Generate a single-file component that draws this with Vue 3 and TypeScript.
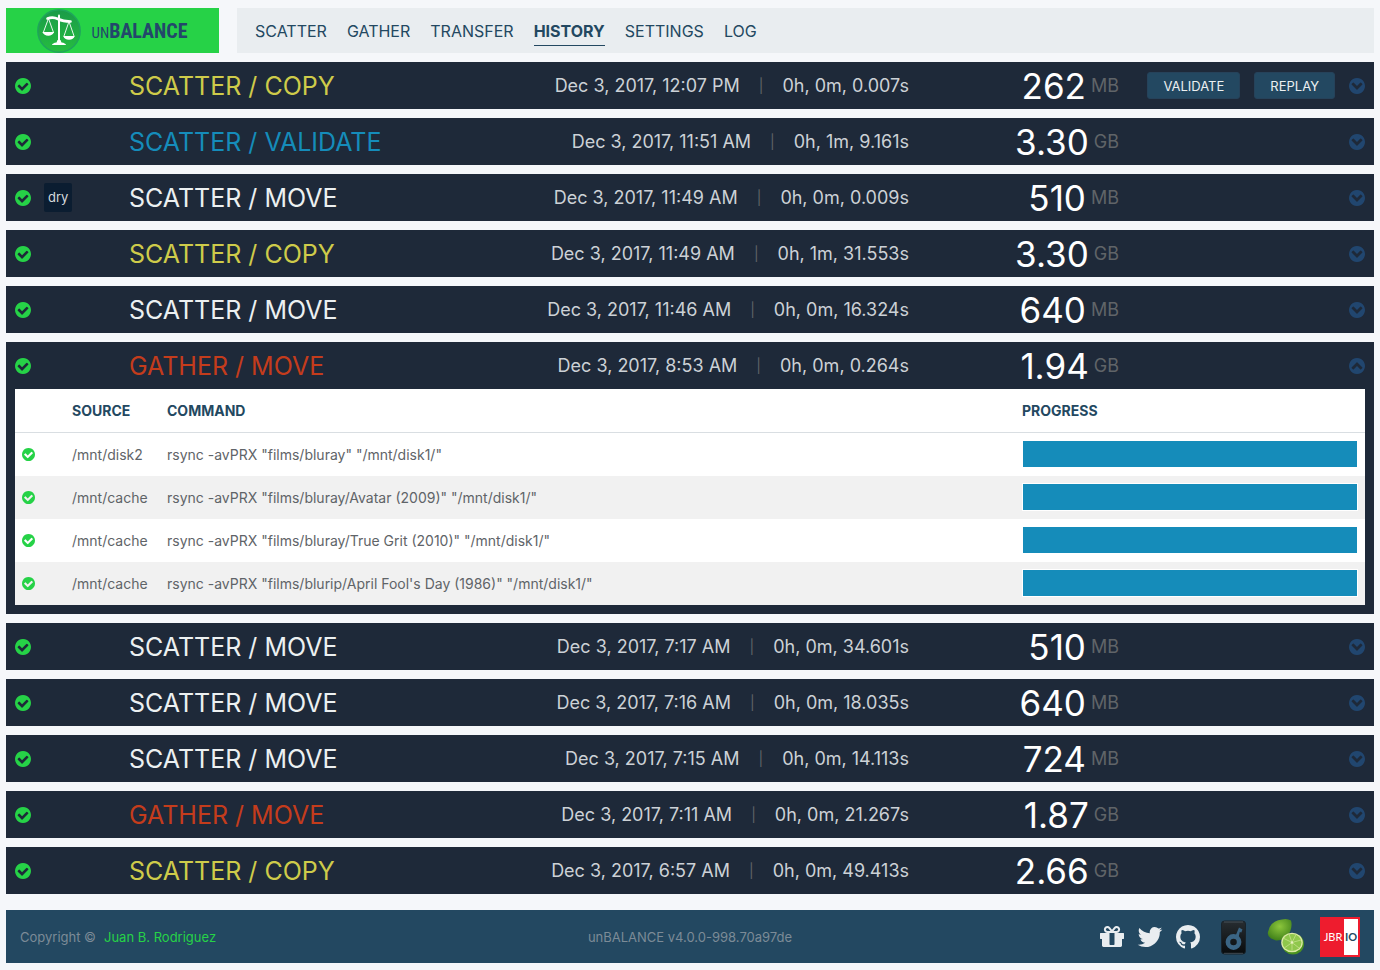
<script setup lang="ts">
import { reactive } from 'vue'

type Kind = 'copy' | 'validate' | 'move' | 'gather'

interface Command {
  source: string
  line: string
  progress: number
}

interface Operation {
  id: number
  kind: Kind
  title: string
  finished: string
  elapsed: string
  size: string
  unit: string
  dry?: boolean
  actions?: string[]
  open?: boolean
  commands: Command[]
}

const tabs = ['SCATTER', 'GATHER', 'TRANSFER', 'HISTORY', 'SETTINGS', 'LOG']
const activeTab = 'HISTORY'

const operations = reactive<Operation[]>([
  { id: 1, kind: 'copy', title: 'SCATTER / COPY', finished: 'Dec 3, 2017, 12:07 PM', elapsed: '0h, 0m, 0.007s', size: '262', unit: 'MB', actions: ['VALIDATE', 'REPLAY'], commands: [] },
  { id: 2, kind: 'validate', title: 'SCATTER / VALIDATE', finished: 'Dec 3, 2017, 11:51 AM', elapsed: '0h, 1m, 9.161s', size: '3.30', unit: 'GB', commands: [] },
  { id: 3, kind: 'move', title: 'SCATTER / MOVE', finished: 'Dec 3, 2017, 11:49 AM', elapsed: '0h, 0m, 0.009s', size: '510', unit: 'MB', dry: true, commands: [] },
  { id: 4, kind: 'copy', title: 'SCATTER / COPY', finished: 'Dec 3, 2017, 11:49 AM', elapsed: '0h, 1m, 31.553s', size: '3.30', unit: 'GB', commands: [] },
  { id: 5, kind: 'move', title: 'SCATTER / MOVE', finished: 'Dec 3, 2017, 11:46 AM', elapsed: '0h, 0m, 16.324s', size: '640', unit: 'MB', commands: [] },
  {
    id: 6, kind: 'gather', title: 'GATHER / MOVE', finished: 'Dec 3, 2017, 8:53 AM', elapsed: '0h, 0m, 0.264s', size: '1.94', unit: 'GB', open: true,
    commands: [
      { source: '/mnt/disk2', line: 'rsync -avPRX "films/bluray" "/mnt/disk1/"', progress: 100 },
      { source: '/mnt/cache', line: 'rsync -avPRX "films/bluray/Avatar (2009)" "/mnt/disk1/"', progress: 100 },
      { source: '/mnt/cache', line: 'rsync -avPRX "films/bluray/True Grit (2010)" "/mnt/disk1/"', progress: 100 },
      { source: '/mnt/cache', line: 'rsync -avPRX "films/blurip/April Fool\'s Day (1986)" "/mnt/disk1/"', progress: 100 },
    ],
  },
  { id: 7, kind: 'move', title: 'SCATTER / MOVE', finished: 'Dec 3, 2017, 7:17 AM', elapsed: '0h, 0m, 34.601s', size: '510', unit: 'MB', commands: [] },
  { id: 8, kind: 'move', title: 'SCATTER / MOVE', finished: 'Dec 3, 2017, 7:16 AM', elapsed: '0h, 0m, 18.035s', size: '640', unit: 'MB', commands: [] },
  { id: 9, kind: 'move', title: 'SCATTER / MOVE', finished: 'Dec 3, 2017, 7:15 AM', elapsed: '0h, 0m, 14.113s', size: '724', unit: 'MB', commands: [] },
  { id: 10, kind: 'gather', title: 'GATHER / MOVE', finished: 'Dec 3, 2017, 7:11 AM', elapsed: '0h, 0m, 21.267s', size: '1.87', unit: 'GB', commands: [] },
  { id: 11, kind: 'copy', title: 'SCATTER / COPY', finished: 'Dec 3, 2017, 6:57 AM', elapsed: '0h, 0m, 49.413s', size: '2.66', unit: 'GB', commands: [] },
])

const checkPath = 'M1412 734q0-28-18-46l-91-90q-19-19-45-19t-45 19l-408 407-226-226q-19-19-45-19t-45 19l-91 90q-18 18-18 46 0 27 18 45l362 362q19 19 45 19 27 0 46-19l543-543q18-18 18-45zm252 162q0 209-103 385.5t-279.5 279.5-385.5 103-385.5-103-279.5-279.5-103-385.5 103-385.5 279.5-279.5 385.5-103 385.5 103 279.5 279.5 103 385.5z'
const chevronPath = 'M941 1235l454-454q19-19 19-45t-19-45l-102-102q-19-19-45-19t-45 19l-307 307-307-307q-19-19-45-19t-45 19l-102 102q-19 19-19 45t19 45l454 454q19 19 45 19t45-19zm723-339q0 209-103 385.5t-279.5 279.5-385.5 103-385.5-103-279.5-279.5-103-385.5 103-385.5 279.5-279.5 385.5-103 385.5 103 279.5 279.5 103 385.5z'

const socials = [
  { label: 'Donate', path: 'M1056 1356v-716h-320v716q0 25 18 38.5t46 13.5h192q28 0 46-13.5t18-38.5zm-456-844h195l-126-161q-26-31-69-31-40 0-68 28t-28 68 28 68 68 28zm688-96q0-40-28-68t-68-28q-43 0-69 31l-125 161h194q40 0 68-28t28-68zm376 256v320q0 14-9 23t-23 9h-96v416q0 40-28 68t-68 28h-1088q-40 0-68-28t-28-68v-416h-96q-14 0-23-9t-9-23v-320q0-14 9-23t23-9h440q-93 0-158.5-65.5t-65.5-158.5 65.5-158.5 158.5-65.5q107 0 168 77l128 165 128-165q61-77 168-77 93 0 158.5 65.5t65.5 158.5-65.5 158.5-158.5 65.5h440q14 0 23 9t9 23z' },
  { label: 'Twitter', path: 'M1684 408q-67 98-162 167 1 14 1 42 0 130-38 259.5t-115.5 248.5-184.5 210.5-258 146-323 54.5q-271 0-496-145 35 4 78 4 225 0 401-138-105-2-188-64.5t-114-159.5q33 5 61 5 43 0 85-11-112-23-185.5-111.5t-73.5-205.5v-4q68 38 146 41-66-44-105-115t-39-154q0-88 44-163 121 149 294.5 238.5t371.5 99.5q-8-38-8-74 0-134 94.5-228.5t228.5-94.5q140 0 236 102 109-21 205-78-37 115-142 178 93-10 186-50z' },
  { label: 'GitHub', path: 'M896 128q209 0 385.5 103t279.5 279.5 103 385.5q0 251-146.5 451.5t-378.5 277.5q-27 5-40-7t-13-30q0-3 .5-76.5t.5-134.5q0-97-52-142 57-6 102.5-18t94-39 81-66.5 53-105 20.5-150.5q0-119-79-206 37-91-8-204-28-9-81 11t-92 44l-38 24q-93-26-192-26t-192 26q-16-11-42.5-27t-83.5-38.5-85-13.5q-45 113-8 204-79 87-79 206 0 85 20.5 150t52.5 105 80.5 67 94 39 102.5 18q-39 36-49 103-21 10-45 15t-57 5-65.5-21.5-55.5-62.5q-19-32-48.5-52t-49.5-24l-20-3q-21 0-29 4.5t-5 11.5 9 14 13 12l7 5q22 10 43.5 38t31.5 51l10 23q13 38 44 61.5t67 30 69.5 7 55.5-3.5l23-4q0 38 .5 88.5t.5 54.5q0 18-13 30t-40 7q-232-77-378.5-277.5t-146.5-451.5q0-209 103-385.5t279.5-279.5 385.5-103z' },
]
</script>

<template>
  <div class="page">
    <header class="top">
      <a class="brand" href="#">
        <svg class="scales" viewBox="0 0 44 44" aria-hidden="true">
          <defs>
            <linearGradient id="disc" x1="0" y1="0" x2="0" y2="1">
              <stop offset="0" stop-color="#1a9b48" />
              <stop offset="1" stop-color="#25bd40" />
            </linearGradient>
          </defs>
          <circle cx="22" cy="22" r="21.2" fill="url(#disc)" stroke="#1fa55c" stroke-width="1.4" />
          <g fill="none" stroke="#fff" stroke-linecap="round">
            <path d="M10.5 9.5 Q16 7.5 21 10 T33.5 12.5" stroke-width="2.6" />
            <path d="M11.5 9.5 L6.3 23.5 M11.5 9.5 L16.5 23.5 M32 12.5 L27 27 M32 12.5 L37 27" stroke-width="0.9" />
            <path d="M22 6.5 V33" stroke-width="2" />
          </g>
          <path d="M5.5 23 H17 Q15.5 26.8 11.3 26.8 T5.5 23Z M26.3 27 H37.7 Q36.5 30.8 32 30.8 T26.3 27Z M20.5 31 H23.5 L24.5 33.5 Q28.5 34 29 36 H15 Q15.5 34 19.5 33.5Z" fill="#fff" />
        </svg>
        <span class="wordmark"><small>UN</small>BALANCE</span>
      </a>
      <nav class="tabs">
        <a v-for="tab in tabs" :key="tab" href="#" :class="{ active: tab === activeTab }">{{ tab }}</a>
      </nav>
    </header>

    <main class="history">
      <section v-for="op in operations" :key="op.id" class="operation">
        <div class="summary">
          <div class="status">
            <svg class="icon done" viewBox="128 128 1536 1536" aria-hidden="true"><path :d="checkPath" /></svg>
            <span v-if="op.dry" class="dry">dry</span>
          </div>
          <h2 class="title" :class="op.kind">{{ op.title }}</h2>
          <div class="times">
            <span>{{ op.finished }}</span>
            <span class="bar">|</span>
            <span>{{ op.elapsed }}</span>
          </div>
          <div class="size">
            <span class="amount">{{ op.size }}</span>
            <span class="unit">{{ op.unit }}</span>
          </div>
          <div class="actions">
            <button v-for="action in op.actions" :key="action" type="button" class="action">{{ action }}</button>
            <button type="button" class="toggle" :aria-expanded="!!op.open" aria-label="Toggle details" @click="op.open = !op.open">
              <svg class="icon" :class="{ up: op.open }" viewBox="128 128 1536 1536" aria-hidden="true"><path :d="chevronPath" /></svg>
            </button>
          </div>
        </div>

        <div v-if="op.open" class="details">
          <table>
            <thead>
              <tr>
                <th class="col-status"></th>
                <th class="col-source">SOURCE</th>
                <th>COMMAND</th>
                <th class="col-progress">PROGRESS</th>
              </tr>
            </thead>
            <tbody>
              <tr v-for="command in op.commands" :key="command.line">
                <td><svg class="icon small done" viewBox="128 128 1536 1536" aria-hidden="true"><path :d="checkPath" /></svg></td>
                <td>{{ command.source }}</td>
                <td>{{ command.line }}</td>
                <td>
                  <div class="track" role="progressbar" aria-label="Progress" :aria-valuenow="command.progress">
                    <div class="fill" :style="{ width: command.progress + '%' }"></div>
                  </div>
                </td>
              </tr>
            </tbody>
          </table>
        </div>
      </section>
    </main>

    <footer class="foot">
      <div class="copyright">
        <span>Copyright ©</span>
        <a href="#">Juan B. Rodriguez</a>
      </div>
      <div class="version">unBALANCE v4.0.0-998.70a97de</div>
      <div class="links">
        <div class="socials">
          <a v-for="social in socials" :key="social.label" href="#" :aria-label="social.label">
            <svg viewBox="0 0 1792 1792" aria-hidden="true"><path :d="social.path" /></svg>
          </a>
        </div>
        <a href="#" aria-label="Music plugin">
          <svg class="speaker" viewBox="0 0 26 36" aria-hidden="true">
            <defs>
              <linearGradient id="case" x1="0" y1="0" x2="0" y2="1">
                <stop offset="0" stop-color="#272d31" />
                <stop offset="1" stop-color="#080b0d" />
              </linearGradient>
            </defs>
            <rect x="1.5" y="2" width="24" height="33" rx="3" fill="url(#case)" stroke="#18232b" />
            <path d="M4 3 H23 M4 34.3 H23" stroke="#56636b" stroke-width="0.7" />
            <circle cx="13.5" cy="23" r="5.6" fill="none" stroke="#3b6584" stroke-width="4.6" />
            <path d="M15.5 17 L19 8.500 L22.500 10.500 L21.300 13.500 L19.800 13 L18.500 18.500Z" fill="#3b6584" />
          </svg>
        </a>
        <a href="#" aria-label="Lime Technology">
          <svg class="limes" viewBox="0 0 38 37" aria-hidden="true">
            <defs>
              <radialGradient id="peel" cx="0.5" cy="0.35" r="0.65">
                <stop offset="0" stop-color="#8cc63c" />
                <stop offset="1" stop-color="#41821a" />
              </radialGradient>
            </defs>
            <path d="M1 14 Q3 3 15 1.5 Q20 0 24 2.5 Q25.5 8 23 14 Q18 23 9 22.5 L4 20.5 Q0 18 1 14Z" fill="url(#peel)" />
            <ellipse cx="26" cy="26" rx="11" ry="10.5" fill="#4c9320" />
            <ellipse cx="25" cy="24.5" rx="10.8" ry="9.8" fill="#dceaa6" />
            <ellipse cx="25" cy="24.5" rx="9.5" ry="8.5" fill="#8fc74c" />
            <path d="M25 24.5 L17 20.5 M25 24.5 L22 16 M25 24.5 L29 16.5 M25 24.5 L34 22 M25 24.5 L32 30 M25 24.5 L25 33 M25 24.5 L18 29.5" stroke="#c5df8c" stroke-width="0.8" />
            <circle cx="25" cy="24.5" r="1.2" fill="#e8f2c0" />
          </svg>
        </a>
        <a class="jbrio" href="#"><span class="jbr">JBR</span><span class="io">IO</span></a>
      </div>
    </footer>
  </div>
</template>

<style>
body {
  margin: 0;
  background: #f5f7fa;
}
</style>

<style scoped>
.page {
  padding: 8px 6px 7px;
  font-family: Inter, "Liberation Sans", sans-serif;
  font-size: 14px;
  color: #5f6468;
}

a {
  color: inherit;
  text-decoration: none;
}

.top {
  display: grid;
  grid-template-columns: repeat(6, 1fr);
  column-gap: 18px;
  margin-bottom: 9px;
}

.brand {
  display: flex;
  align-items: center;
  justify-content: center;
  gap: 10px;
  height: 45px;
  background: #26d247;
}

.scales {
  width: 44px;
  height: 44px;
}

.wordmark {
  font-family: "Roboto Condensed", Roboto, sans-serif;
  font-size: 20px;
  font-weight: 700;
  color: #23476b;
}

.wordmark small {
  font-size: 15px;
  font-weight: 400;
}

.tabs {
  grid-column: span 5;
  display: flex;
  align-items: center;
  gap: 20px;
  padding: 2px 18px 0;
  background: #e9edf0;
  font-size: 16px;
  line-height: 27px;
  color: #234861;
}

.tabs a {
  border-bottom: 1px solid transparent;
}

.tabs .active {
  border-color: #234861;
  font-weight: 700;
}

.history {
  display: flex;
  flex-direction: column;
  gap: 9px;
}

.operation {
  background: #1e2939;
}

.summary {
  display: grid;
  grid-template-columns: 114px 380fr 400fr 210fr 246px;
  align-items: center;
  height: 47px;
  padding: 0 9px;
}

.status {
  display: flex;
  align-items: center;
  gap: 13px;
}

.icon {
  display: block;
  width: 16px;
  height: 16px;
  fill: currentColor;
}

.icon.small {
  width: 13px;
  height: 13px;
}

.icon.up {
  transform: rotate(180deg);
}

.done {
  color: #26d247;
}

.dry {
  padding: 0 4px;
  border-radius: 2px;
  background: #0b1d31;
  font-size: 13px;
  line-height: 29px;
  color: #d5dade;
}

.title {
  margin: 0;
  font-size: 25px;
  font-weight: 400;
  white-space: nowrap;
}

.copy {
  color: #cecb4a;
}

.validate {
  color: #158cba;
}

.move {
  color: #ecf0f1;
}

.gather {
  color: #c43c1c;
}

.times {
  display: flex;
  align-items: center;
  justify-content: flex-end;
  gap: 19px;
  font-size: 18px;
  color: #ccd1d6;
  white-space: nowrap;
}

.bar,
.unit {
  color: #606468;
}

.bar {
  font-size: 14px;
}

.size {
  display: flex;
  align-items: center;
  justify-content: flex-end;
  gap: 5px;
}

.amount {
  font-size: 35px;
  line-height: 46px;
  color: #fff;
}

.unit {
  font-size: 18px;
}

.actions {
  display: flex;
  align-items: center;
  justify-content: flex-end;
  gap: 14px;
}

button {
  font: inherit;
  cursor: pointer;
}

.action {
  height: 27px;
  padding: 0 15px;
  border: 1px solid #26425a;
  border-radius: 3px;
  background: #234861;
  font-size: 13px;
  color: #ecf0f1;
}

.toggle {
  padding: 0;
  border: 0;
  background: none;
  color: #21466f;
}

.details {
  padding: 0 9px 9px;
}

table {
  width: 100%;
  border-collapse: collapse;
  table-layout: fixed;
  background: #fff;
}

th,
td {
  height: 43px;
  padding: 0 7px;
  text-align: left;
}

th {
  border-bottom: 1px solid #d9dee2;
  font-weight: 700;
  color: #234861;
}

tbody tr:nth-child(even) {
  background: #f1f1f1;
}

.col-status {
  width: 36px;
}

.col-source {
  width: 81px;
}

.col-progress {
  width: 336px;
}

.track {
  margin-bottom: 1px;
  border: 1px solid #fff;
  background: #fff;
}

.fill {
  height: 26px;
  background: #158cba;
}

.foot {
  display: grid;
  grid-template-columns: 1fr auto 1fr;
  align-items: center;
  height: 53px;
  margin-top: 16px;
  padding: 0 14px;
  background: #234861;
  font-size: 13px;
  color: #7c8b97;
}

.copyright {
  display: flex;
  gap: 8px;
}

.copyright a {
  color: #26d247;
}

.links {
  display: flex;
  align-items: center;
  justify-content: flex-end;
  gap: 15px;
}

.socials {
  display: flex;
  gap: 10px;
  margin-right: 3px;
}

.links svg {
  display: block;
}

.socials svg {
  width: 28px;
  height: 28px;
  fill: #e9edf0;
}

.speaker {
  width: 26px;
  height: 36px;
  margin-right: 6px;
}

.limes {
  width: 38px;
  height: 37px;
}

.jbrio {
  display: flex;
  box-sizing: border-box;
  width: 40px;
  height: 40px;
  border: 2px solid #ee1c2e;
  font-family: Lato, sans-serif;
  font-size: 11px;
  line-height: 36px;
  text-align: center;
}

.jbr {
  flex: 22 0 0;
  background: #ee1c2e;
  color: #fff;
}

.io {
  flex: 14 0 0;
  background: #fff;
  font-weight: 700;
  color: #234861;
}
</style>
